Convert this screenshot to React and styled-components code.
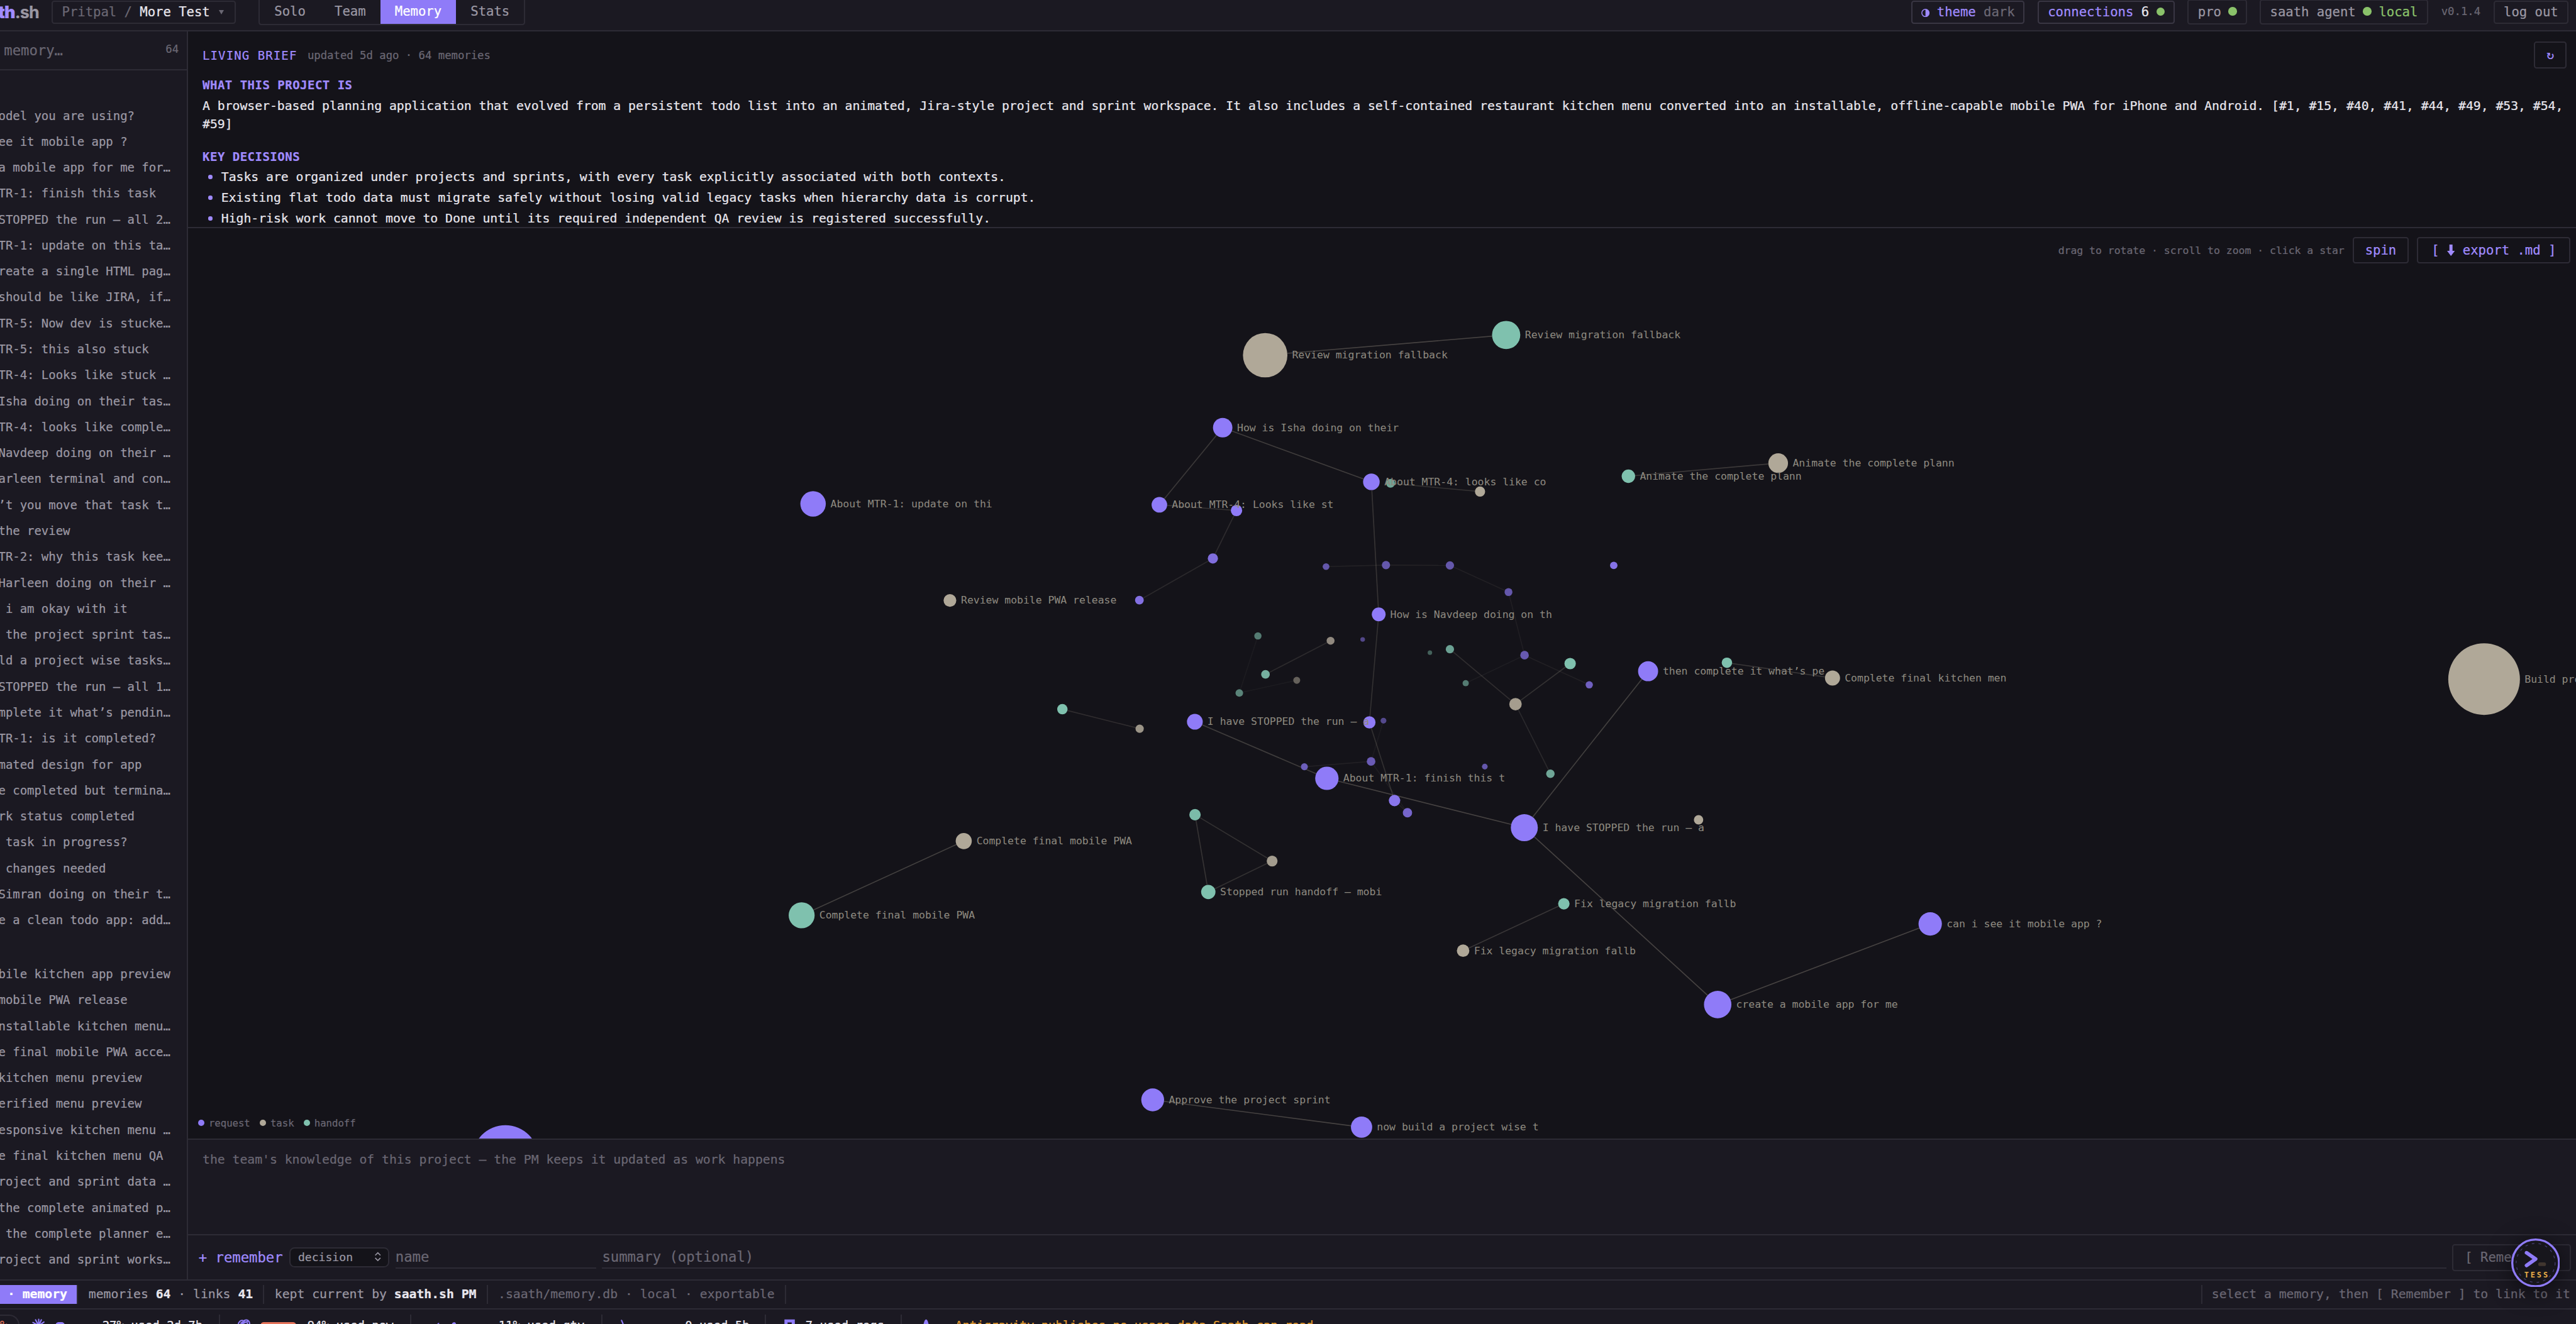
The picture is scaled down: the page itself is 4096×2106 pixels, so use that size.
import React from 'react';
import styled, { createGlobalStyle } from 'styled-components';

const color = {
  bg: '#141319',
  panel: '#1b1922',
  line: '#2d2b35',
  text: '#e8e6ed',
  mid: '#9a97a3',
  dim: '#6a6773',
  accent: '#8f7bf8',
  accentText: '#a08bff',
  green: '#8ac26a',
  amber: '#e09a2e',
  red: '#e5735a',
  task: '#b0a898',
  handoff: '#7fc1ae',
};

const hairline = `2.5px solid ${color.line}`;

const GlobalStyle = createGlobalStyle`
  * {
    box-sizing: border-box;
  }

  html,
  body {
    margin: 0;
    overflow: hidden;
    background: ${color.bg};
  }
`;

const Shell = styled.div`
  zoom: 0.8258;
  width: 4965px;
  height: 2553px;
  display: flex;
  flex-direction: column;
  overflow: hidden;
  background: ${color.panel};
  color: ${color.text};
  font-family: 'DejaVu Sans Mono', monospace;
  font-size: 25px;
  letter-spacing: -0.002em;
  white-space: pre;
  -webkit-text-stroke: 0.3px currentColor;
`;

/* top bar */

const TopBar = styled.header`
  height: 60px;
  flex: none;
  display: flex;
  align-items: flex-start;
  width: 4960px;
  padding-right: 14px;
  border-bottom: ${hairline};
`;

const Logo = styled.div`
  width: 75px;
  height: 45px;
  display: flex;
  flex: none;
  align-items: center;
  justify-content: flex-end;
  font-family: Inter, sans-serif;
  font-size: 32.5px;
  font-weight: 700;
  letter-spacing: -0.03em;
  color: ${color.mid};

  b {
    color: ${color.accentText};
  }
`;

const Chip = styled.div`
  height: ${(p) => (p.$tall ? 48 : 45)}px;
  margin-top: ${(p) => (p.$tall ? -1 : 1)}px;
  display: flex;
  flex: none;
  align-items: center;
  width: ${(p) => p.$width}px;
  padding-left: 17.5px;
  border: 2.5px solid ${(p) => (p.$strong ? '#393643' : color.line)};
  border-radius: 5px;
  color: ${color.mid};
`;

const ProjectChip = styled(Chip)`
  margin-left: 24.5px;
`;

const ChipGroup = styled.div`
  display: flex;
  gap: 24.5px;
  margin-left: auto;
`;

const Tone = styled.span`
  color: ${(p) => color[p.$c]};
  font-weight: ${(p) => (p.$bold ? 700 : 400)};
`;

const Caret = styled.span`
  width: 0;
  margin-left: 17px;
  border: 5px solid transparent;
  border-top: 9px solid ${color.dim};
  border-bottom: 0;
`;

const Dot = styled.i`
  width: ${(p) => p.$size || 16.5}px;
  height: ${(p) => p.$size || 16.5}px;
  flex: none;
  border-radius: 50%;
  background: ${(p) => p.$fill || color.green};
`;

const ChipDot = styled(Dot)`
  margin: 0 14px;
  position: relative;
  top: -1px;
`;

const HalfMoon = styled.svg`
  width: 16px;
  height: 16px;
  margin: 2px 14px 0 0;
`;

const Version = styled.div`
  width: 76px;
  height: 45px;
  line-height: 45px;
  font-size: 21px;
  color: ${color.dim};
`;

const Tabs = styled.nav`
  height: 49px;
  margin-left: 44px;
  display: flex;
  border: ${hairline};
  border-top: 0;
  border-radius: 0 0 5px 5px;
`;

const Tab = styled.div`
  padding: 0 28px;
  line-height: 45px;
  color: ${(p) => (p.$active ? '#fff' : color.mid)};
  background: ${(p) => (p.$active ? color.accent : 'transparent')};
`;

/* memory list */

const Body = styled.div`
  display: flex;
  height: 2404px;
  flex: none;
`;

const Sidebar = styled.aside`
  width: 362.5px;
  flex: none;
  border-right: ${hairline};
`;

const Search = styled.div`
  height: 75.5px;
  padding: 0 16px 0 0;
  display: flex;
  align-items: center;
  justify-content: space-between;
  border-bottom: ${hairline};
  color: ${color.dim};
  font-size: 27px;
`;

const SearchHint = styled.div`
  width: 121px;
  display: flex;
  justify-content: flex-end;
`;

const Count = styled.span`
  font-size: 21px;
  margin-top: -5px;
`;

const MemoryList = styled.div`
  padding-top: ${(p) => p.$top}px;
`;

const MemoryRow = styled.div`
  height: 50px;
  margin-left: -3px;
  line-height: 50px;
  font-size: 23px;
  color: ${color.mid};
`;

/* main column */

const Main = styled.main`
  width: 4597.5px;
  flex: none;
  display: flex;
  flex-direction: column;
`;

const Brief = styled.section`
  height: 380px;
  flex: none;
  padding: 20px 18px 0 27.5px;
  overflow: hidden;
  background: ${color.bg};
  border-bottom: ${hairline};
`;

const BriefHead = styled.div`
  height: 52px;
  display: flex;
  align-items: center;
`;

const BriefTitle = styled.span`
  font-size: 23px;
  letter-spacing: 0.058em;
  color: ${color.accentText};
`;

const Updated = styled.span`
  margin-left: 20px;
  font-size: 21px;
  color: ${color.dim};
`;

const Button = styled.button`
  height: 52px;
  width: ${(p) => p.$width}px;
  padding: 0;
  flex: none;
  display: flex;
  align-items: center;
  justify-content: center;
  background: transparent;
  border: ${hairline};
  border-radius: 5px;
  color: ${(p) => (p.$muted ? color.dim : color.accentText)};
  font: inherit;
  letter-spacing: inherit;
`;

const RememberButton = styled(Button)`
  font-size: 25px;
`;

const Refresh = styled(Button)`
  margin-left: auto;
  font-size: 24px;
`;

const BriefHeading = styled.h3`
  height: 36px;
  line-height: 36px;
  margin: ${(p) => p.$top}px 0 0;
  font-size: 23px;
  letter-spacing: 0.026em;
  color: ${color.accentText};
`;

const BriefText = styled.p`
  margin: 3px 0 0;
  font-size: 24px;
  line-height: 36px;
`;

const Bullet = styled.div`
  height: 40px;
  line-height: 40px;
  display: flex;
  align-items: center;
  font-size: 24px;
`;

const BulletDot = styled(Dot)`
  margin: 0 17px 0 11px;
`;

const Sky = styled.section`
  height: 1756px;
  flex: none;
  position: relative;
  background: ${color.bg};
  border-bottom: ${hairline};

  > svg {
    display: block;
  }
`;

const SkyTools = styled.div`
  position: absolute;
  top: 16px;
  right: 10.5px;
  display: flex;
  align-items: center;
  gap: 16px;
`;

const Hint = styled.span`
  font-size: 20px;
  color: ${color.dim};
`;

const ArrowGlyph = styled.svg`
  width: 15px;
  height: 22px;
`;

const Legend = styled.div`
  position: absolute;
  left: 19.5px;
  bottom: 19px;
  display: flex;
  gap: 19px;
  font-size: 19px;
  color: ${color.dim};
`;

const LegendItem = styled.span`
  display: flex;
  align-items: center;
  gap: 8px;
`;

const NodeLabel = styled.text`
  font-size: 20px;
  fill: #8e8a80;
`;

const Notes = styled.section`
  height: 184px;
  flex: none;
  padding: 20px 27.5px;
  font-size: 24px;
  line-height: 36px;
  color: ${color.dim};
  border-bottom: ${hairline};
`;

const RememberRow = styled.section`
  height: 84px;
  padding: 0 10px 0 20px;
  display: flex;
  align-items: center;
  gap: 12px;
  font-size: 27px;
`;

const RememberTitle = styled.span`
  width: 162px;
  color: ${color.accentText};
`;

const Select = styled.div`
  width: 193px;
  height: 38px;
  padding: 0 12px 2px 15px;
  display: flex;
  align-items: center;
  justify-content: space-between;
  background: ${color.bg};
  border: ${hairline};
  border-radius: 10px;
  font-size: 22px;
  color: ${color.mid};

  svg {
    width: 14px;
    height: 19px;
  }
`;

const Field = styled.div`
  height: 44px;
  line-height: 42px;
  width: ${(p) => p.$width}px;
  flex: ${(p) => (p.$grow ? '1' : 'none')};
  border-bottom: ${hairline};
  color: ${color.dim};
`;

/* status bars */

const StatusBar = styled.footer`
  width: 4960px;
  height: 58px;
  flex: none;
  display: flex;
  align-items: center;
  border-top: ${hairline};
  border-bottom: ${hairline};
  font-size: 24px;
  color: ${color.mid};
`;

const StatusItem = styled.div`
  height: 36px;
  line-height: 36px;
  padding: 0 19.5px 0 20px;
  border-right: ${hairline};
  color: ${(p) => (p.$muted ? color.dim : 'inherit')};
`;

const ModeItem = styled(StatusItem)`
  padding-left: 14.5px;
  width: 150.5px;
  background: ${color.accent};
  background-clip: padding-box;
  color: #fff;
  font-weight: 700;
`;

const StatusHint = styled(StatusItem)`
  margin-left: auto;
  padding: 0 11px 0 18px;
  border-right: 0;
  border-left: ${hairline};
  color: ${color.dim};
`;

const UsageBar = styled.div`
  height: 62px;
  flex: none;
  display: flex;
  align-items: center;
  font-size: 23px;
`;

const LimitPill = styled.div`
  width: 37px;
  height: 42px;
  border: ${hairline};
  border-left: 0;
  border-radius: 0 20px 20px 0;
  color: ${color.red};
  line-height: 38px;
`;

const UsageItem = styled.div`
  width: ${(p) => p.$width}px;
  height: 42px;
  padding-left: ${(p) => p.$pad}px;
  flex: none;
  display: flex;
  align-items: center;
  border-right: ${(p) => (p.$last ? '0' : hairline)};
`;

const UsageIcon = styled.svg`
  width: 28px;
  height: 28px;
  flex: none;
  margin-right: ${(p) => p.$gap || 18}px;
  fill: none;
  stroke: ${color.accent};
  stroke-width: 2.6;
  stroke-linecap: round;
`;

const Meter = styled.div`
  width: 71px;
  height: 12px;
  margin-right: 20px;
  flex: none;
  border-radius: 6px;
  background: ${color.panel};
  overflow: hidden;
`;

const MeterFill = styled.div`
  height: 100%;
  border-radius: 6px;
  background: ${(p) => (p.$hot ? color.red : color.accent)};
`;

const Assistant = styled.div`
  position: absolute;
  left: 4835px;
  top: 2385px;
  width: 94px;
  height: 94px;
  border-radius: 50%;
  background: #17161c;
  box-shadow: 0 8px 44px rgba(0, 0, 0, 0.55);

  svg {
    display: block;
  }
`;

const requests = [
  'odel you are using?',
  'ee it mobile app ?',
  'a mobile app for me for…',
  'TR-1: finish this task',
  'STOPPED the run — all 2…',
  'TR-1: update on this ta…',
  'reate a single HTML pag…',
  'should be like JIRA, if…',
  'TR-5: Now dev is stucke…',
  'TR-5: this also stuck',
  'TR-4: Looks like stuck …',
  'Isha doing on their tas…',
  'TR-4: looks like comple…',
  'Navdeep doing on their …',
  'arleen terminal and con…',
  '’t you move that task t…',
  'the review',
  'TR-2: why this task kee…',
  'Harleen doing on their …',
  ' i am okay with it',
  ' the project sprint tas…',
  'ld a project wise tasks…',
  'STOPPED the run — all 1…',
  'mplete it what’s pendin…',
  'TR-1: is it completed?',
  'mated design for app',
  'e completed but termina…',
  'rk status completed',
  ' task in progress?',
  ' changes needed',
  'Simran doing on their t…',
  'e a clean todo app: add…',
];

const tasks = [
  'bile kitchen app preview',
  'mobile PWA release',
  'nstallable kitchen menu…',
  'e final mobile PWA acce…',
  'kitchen menu preview',
  'erified menu preview',
  'esponsive kitchen menu …',
  'e final kitchen menu QA',
  'roject and sprint data …',
  'the complete animated p…',
  ' the complete planner e…',
  'roject and sprint works…',
];

// id: [x, y, radius, kind, opacity, label]
const stars = {
  1: [2436, 684.6, 42.8, 't', 1, 'Review migration fallback'],
  2: [2900, 645.7, 27.2, 'h', 1, 'Review migration fallback'],
  3: [2354.2, 824.2, 18.7, 'r', 1, 'How is Isha doing on their'],
  4: [2640.5, 928.5, 16, 'r', 1, 'About MTR-4: looks like co'],
  5: [2677.3, 931.4, 8.5, 'h', 0.85],
  6: [2849.7, 947.3, 9.8, 't', 1],
  7: [3135.4, 917.7, 13, 'h', 1, 'Animate the complete plann'],
  8: [3423.8, 892.5, 18.9, 't', 1, 'Animate the complete plann'],
  9: [2232.3, 972.8, 15, 'r', 1, 'About MTR-4: Looks like st'],
  10: [2380.8, 983.7, 11, 'r', 1],
  11: [2335.3, 1076.1, 9.8, 'r', 0.88],
  12: [2193.8, 1156.5, 8.4, 'r', 0.9],
  13: [2553.2, 1091.8, 6.5, 'r', 0.66],
  14: [2668.6, 1088.9, 8, 'r', 0.66],
  15: [2791.7, 1089.5, 8, 'r', 0.66],
  16: [2904.5, 1140.9, 7.6, 'r', 0.66],
  17: [3107.2, 1089.5, 7.2, 'r', 0.92],
  18: [2654.6, 1183.9, 13.3, 'r', 1, 'How is Navdeep doing on th'],
  19: [2422, 1225.4, 7, 'h', 0.6],
  20: [2561.9, 1234.6, 7.6, 't', 0.8],
  21: [2623.7, 1232.1, 4.5, 'r', 0.5],
  22: [2753.2, 1257.6, 4.3, 'h', 0.45],
  23: [2791.7, 1250.9, 8, 'h', 0.82],
  24: [2935.4, 1262.4, 8.2, 'r', 0.68],
  25: [3023.2, 1278.6, 11, 'h', 1],
  26: [2436.6, 1299.4, 8.3, 'h', 0.9],
  27: [2496.8, 1310.8, 6.7, 't', 0.52],
  28: [2386.2, 1335.1, 7.3, 'h', 0.65],
  29: [2822.1, 1316.3, 6, 'h', 0.6],
  30: [3060, 1319.5, 7, 'r', 0.75],
  31: [2918, 1356.8, 12, 't', 0.93],
  32: [3173.3, 1293.3, 19.3, 'r', 1, 'then complete it what’s pe'],
  33: [3325.1, 1277, 10, 'h', 1],
  34: [3528.4, 1306.4, 14.5, 't', 1, 'Complete final kitchen men'],
  35: [2300.6, 1390.6, 15.2, 'r', 1, 'I have STOPPED the run — a'],
  36: [2636.7, 1391.8, 11.8, 'r', 1],
  37: [2663.8, 1388.6, 5.6, 'r', 0.52],
  38: [2194.3, 1404, 8, 't', 0.87],
  39: [2511.5, 1477.3, 6.7, 'r', 0.72],
  40: [2639.9, 1467.1, 8.3, 'r', 0.7],
  41: [2858.9, 1477, 5.5, 'r', 0.66],
  42: [2985.2, 1490.7, 8.2, 'h', 0.85],
  43: [2554.8, 1499.6, 22.5, 'r', 1, 'About MTR-1: finish this t'],
  44: [2685.1, 1542.4, 11, 'r', 0.95],
  45: [2710, 1565.9, 9, 'r', 0.8],
  46: [2935, 1594.7, 26, 'r', 1, 'I have STOPPED the run — a'],
  47: [3270.5, 1579.5, 9, 't', 1],
  48: [2300.9, 1569.7, 11, 'h', 0.97],
  49: [2449.4, 1658.9, 10.4, 't', 0.92],
  50: [2326.5, 1718.5, 13.8, 'h', 1, 'Stopped run handoff — mobi'],
  51: [3011.1, 1741.3, 11, 'h', 1, 'Fix legacy migration fallb'],
  52: [2817.1, 1831.6, 12, 't', 1, 'Fix legacy migration fallb'],
  53: [3307.3, 1935.4, 26.4, 'r', 1, 'create a mobile app for me'],
  54: [2621.6, 2171.5, 20.5, 'r', 1, 'now build a project wise t'],
  55: [2219.4, 2119, 22, 'r', 1, 'Approve the project sprint'],
  56: [1565.5, 971, 24.5, 'r', 1, 'About MTR-1: update on thi'],
  57: [1829, 1157, 12.3, 't', 1, 'Review mobile PWA release'],
  58: [2045.5, 1366.5, 10, 'h', 1],
  59: [1855.6, 1620.5, 15.5, 't', 1, 'Complete final mobile PWA'],
  60: [1543.5, 1763.5, 25, 'h', 1, 'Complete final mobile PWA'],
  61: [3716.5, 1780, 22.5, 'r', 1, 'can i see it mobile app ?'],
  62: [4783, 1308.5, 69, 't', 1, 'Build project'],
  63: [973, 2231.3, 63.6, 'r', 1],
};

// [from, to, opacity]
const links = [
  [1, 2, 0.32],
  [3, 9, 0.25],
  [3, 4, 0.28],
  [9, 10, 0.22],
  [10, 11, 0.17],
  [11, 12, 0.15],
  [4, 18, 0.22],
  [18, 36, 0.2],
  [36, 44, 0.2],
  [5, 6, 0.2],
  [7, 8, 0.26],
  [13, 14, 0.1],
  [14, 15, 0.1],
  [15, 16, 0.09],
  [16, 24, 0.08],
  [24, 29, 0.07],
  [24, 30, 0.09],
  [19, 28, 0.06],
  [28, 27, 0.06],
  [20, 26, 0.16],
  [23, 31, 0.18],
  [25, 31, 0.2],
  [31, 42, 0.15],
  [33, 34, 0.24],
  [32, 46, 0.3],
  [35, 43, 0.28],
  [43, 46, 0.32],
  [46, 53, 0.32],
  [53, 61, 0.32],
  [37, 40, 0.06],
  [39, 40, 0.09],
  [40, 45, 0.07],
  [44, 45, 0.1],
  [48, 49, 0.2],
  [48, 50, 0.22],
  [49, 50, 0.2],
  [51, 52, 0.24],
  [55, 54, 0.32],
  [59, 60, 0.3],
  [58, 38, 0.18],
];

const kinds = { r: color.accent, t: color.task, h: color.handoff };

const StarMap = () => (
  <svg width="4597" height="1753" viewBox="362 440 4597 1753">
    {links.map(([a, b, o]) => (
      <line
        key={`${a}-${b}`}
        x1={stars[a][0]}
        y1={stars[a][1]}
        x2={stars[b][0]}
        y2={stars[b][1]}
        stroke={color.task}
        strokeOpacity={o}
        strokeWidth="2"
      />
    ))}
    {Object.entries(stars).map(([id, [x, y, r, kind, o]]) => (
      <g key={id}>
        <circle cx={x} cy={y} r={r} fill={color.bg} />
        <circle cx={x} cy={y} r={r} fill={kinds[kind]} opacity={o} />
      </g>
    ))}
    {Object.entries(stars)
      .filter(([, s]) => s[5])
      .map(([id, [x, y, r, , , label]]) => (
        <NodeLabel key={id} x={x + r + 9} y={y + 6.5}>
          {label}
        </NodeLabel>
      ))}
  </svg>
);

const Meters = ({ value, hot }) => (
  <Meter>
    <MeterFill $hot={hot} style={{ width: `${value}%` }} />
  </Meter>
);

const App = () => (
  <>
    <GlobalStyle />
    <Shell>
      <TopBar>
        <Logo>
          <b>saath</b>.sh
        </Logo>
        <ProjectChip $width={354.5}>
          <Tone $c="dim">Pritpal / </Tone>
          <Tone $c="text">More Test</Tone>
          <Caret />
        </ProjectChip>
        <Tabs>
          <Tab>Solo</Tab>
          <Tab>Team</Tab>
          <Tab $active>Memory</Tab>
          <Tab>Stats</Tab>
        </Tabs>
        <ChipGroup>
          <Chip $width={219} $strong>
            <HalfMoon viewBox="0 0 16 16">
              <circle cx="8" cy="8" r="7" fill="none" stroke={color.accentText} strokeWidth="1.8" />
              <path d="M8 1a7 7 0 0 1 0 14z" fill={color.accentText} />
            </HalfMoon>
            <Tone $c="accentText">theme </Tone>
            <Tone $c="dim">dark</Tone>
          </Chip>
          <Chip $width={264.5} $strong>
            <Tone $c="accentText">connections </Tone>
            <Tone $c="text">6</Tone>
            <ChipDot />
          </Chip>
          <Chip $width={114.5} $tall>
            pro
            <ChipDot />
          </Chip>
          <Chip $width={325} $tall>
            saath agent
            <ChipDot />
            <Tone $c="green">local</Tone>
          </Chip>
          <Version>v0.1.4</Version>
          <Chip $width={145}>log out</Chip>
        </ChipGroup>
      </TopBar>

      <Body>
        <Sidebar>
          <Search>
            <SearchHint>search memory…</SearchHint>
            <Count>64</Count>
          </Search>
          <MemoryList $top={62.5}>
            {requests.map((name) => (
              <MemoryRow key={name}>{name}</MemoryRow>
            ))}
          </MemoryList>
          <MemoryList $top={54}>
            {tasks.map((name) => (
              <MemoryRow key={name}>{name}</MemoryRow>
            ))}
          </MemoryList>
        </Sidebar>

        <Main>
          <Brief>
            <BriefHead>
              <BriefTitle>LIVING BRIEF</BriefTitle>
              <Updated>updated 5d ago · 64 memories</Updated>
              <Refresh $width={63}>↻</Refresh>
            </BriefHead>
            <BriefHeading $top={15}>WHAT THIS PROJECT IS</BriefHeading>
            <BriefText>
              {'A browser-based planning application that evolved from a persistent todo list into an animated, Jira-style project and sprint workspace. It also includes a self-contained restaurant kitchen menu converted into an installable, offline-capable mobile PWA for iPhone and Android. [#1, #15, #40, #41, #44, #49, #53, #54,\n#59]'}
            </BriefText>
            <BriefHeading $top={27}>KEY DECISIONS</BriefHeading>
            <Bullet>
              <BulletDot $size={8} $fill={color.accentText} />
              Tasks are organized under projects and sprints, with every task explicitly associated with both contexts.
            </Bullet>
            <Bullet>
              <BulletDot $size={8} $fill={color.accentText} />
              Existing flat todo data must migrate safely without losing valid legacy tasks when hierarchy data is corrupt.
            </Bullet>
            <Bullet>
              <BulletDot $size={8} $fill={color.accentText} />
              High-risk work cannot move to Done until its required independent QA review is registered successfully.
            </Bullet>
          </Brief>

          <Sky>
            <StarMap />
            <SkyTools>
              <Hint>drag to rotate · scroll to zoom · click a star</Hint>
              <Button $width={108}>spin</Button>
              <Button $width={295.5}>
                {'[ '}
                <ArrowGlyph viewBox="0 0 15 22">
                  <path d="M4.5 0h6v12H15L7.5 22 0 12h4.5z" fill={color.accentText} />
                </ArrowGlyph>
                {' export .md ]'}
              </Button>
            </SkyTools>
            <Legend>
              <LegendItem>
                <Dot $size={12} $fill={color.accent} />
                request
              </LegendItem>
              <LegendItem>
                <Dot $size={12} $fill={color.task} />
                task
              </LegendItem>
              <LegendItem>
                <Dot $size={12} $fill={color.handoff} />
                handoff
              </LegendItem>
            </Legend>
          </Sky>

          <Notes>the team's knowledge of this project — the PM keeps it updated as work happens</Notes>

          <RememberRow>
            <RememberTitle>+ remember</RememberTitle>
            <Select>
              decision
              <svg viewBox="0 0 14 19" fill="none" stroke={color.mid} strokeWidth="2">
                <path d="M2 7l5-5 5 5M2 12l5 5 5-5" />
              </svg>
            </Select>
            <Field $width={386}>name</Field>
            <Field $grow>summary (optional)</Field>
            <RememberButton $width={228} $muted>
              [ Remember ]
            </RememberButton>
          </RememberRow>
        </Main>
      </Body>

      <StatusBar>
        <ModeItem>· memory</ModeItem>
        <StatusItem>
          memories <Tone $c="text" $bold>64</Tone> · links <Tone $c="text" $bold>41</Tone>
        </StatusItem>
        <StatusItem>
          kept current by <Tone $c="text" $bold>saath.sh PM</Tone>
        </StatusItem>
        <StatusItem $muted>.saath/memory.db · local · exportable</StatusItem>
        <StatusHint>select a memory, then [ Remember ] to link to it</StatusHint>
      </StatusBar>

      <UsageBar>
        <LimitPill>%</LimitPill>
        <UsageItem $width={387} $pad={24}>
          <UsageIcon viewBox="0 0 28 28" $gap={17}>
            <path d="M14 14V2M14 14l5-11M14 14l10-7M14 14l12 0M14 14L8 3M14 14L3 8M14 14H2M14 14l10 7M14 14l5 11M14 14v12M14 14L8 25M14 14L4 20" />
          </UsageIcon>
          <Meters value={27} />
          27% used 2d 7h
        </UsageItem>
        <UsageItem $width={368} $pad={31}>
          <UsageIcon viewBox="0 0 28 28">
            <path d="M4 15C2 8 8 2 14 5c6-5 13 1 11 8 3 6-2 12-8 11-5 4-13 1-12-6zM9 19V9l7-4M12 17V10l9-4M16 18l5-3V9" />
          </UsageIcon>
          <Meters value={98} hot />
          94% used now
        </UsageItem>
        <UsageItem $width={368} $pad={31}>
          <UsageIcon viewBox="0 0 28 28">
            <path d="M5 25L21 10M9 18a6 6 0 1 0 9 2" />
          </UsageIcon>
          <Meters value={12} />
          11% used qty
        </UsageItem>
        <UsageItem $width={315} $pad={22}>
          <UsageIcon viewBox="0 0 28 28">
            <path d="M15 4l5 12M20 16l-8 9" />
          </UsageIcon>
          <Meters value={0} />
          0 used 5h
        </UsageItem>
        <UsageItem $width={262} $pad={32}>
          <UsageIcon viewBox="0 0 28 28" $gap={16}>
            <path d="M7 5h14v18H7z" strokeWidth="6" strokeLinecap="butt" />
          </UsageIcon>
          7 used reqs
        </UsageItem>
        <UsageItem $width={800} $pad={32} $last>
          <UsageIcon viewBox="0 0 28 28" $gap={15}>
            <path d="M4 26C9 20 9 2 14 2s5 18 10 24c-5-2-6-6-10-6s-5 4-10 6z" fill={color.accent} stroke="none" />
          </UsageIcon>
          <Tone $c="amber">▴ Antigravity publishes no usage data Saath can read</Tone>
        </UsageItem>
      </UsageBar>

      <Assistant>
        <svg width="94" height="94" viewBox="0 0 94 94" fill="none">
          <circle cx="47" cy="47" r="45" stroke={color.accent} strokeWidth="4" />
          <circle cx="47" cy="47" r="37.5" stroke={color.accent} strokeOpacity="0.4" strokeWidth="1.5" strokeDasharray="5 8" />
          <path d="M29.5 27.5L47 39.5 29.5 52" stroke={color.accent} strokeWidth="7" strokeLinecap="round" strokeLinejoin="round" />
          <rect x="52" y="46" width="15" height="7" rx="3.5" fill="#40362f" />
          <text x="25" y="75" fontSize="14.5" fontWeight="700" letterSpacing="3.5" fill="#e9ae48">
            TESS
          </text>
        </svg>
      </Assistant>
    </Shell>
  </>
);

export default App;
